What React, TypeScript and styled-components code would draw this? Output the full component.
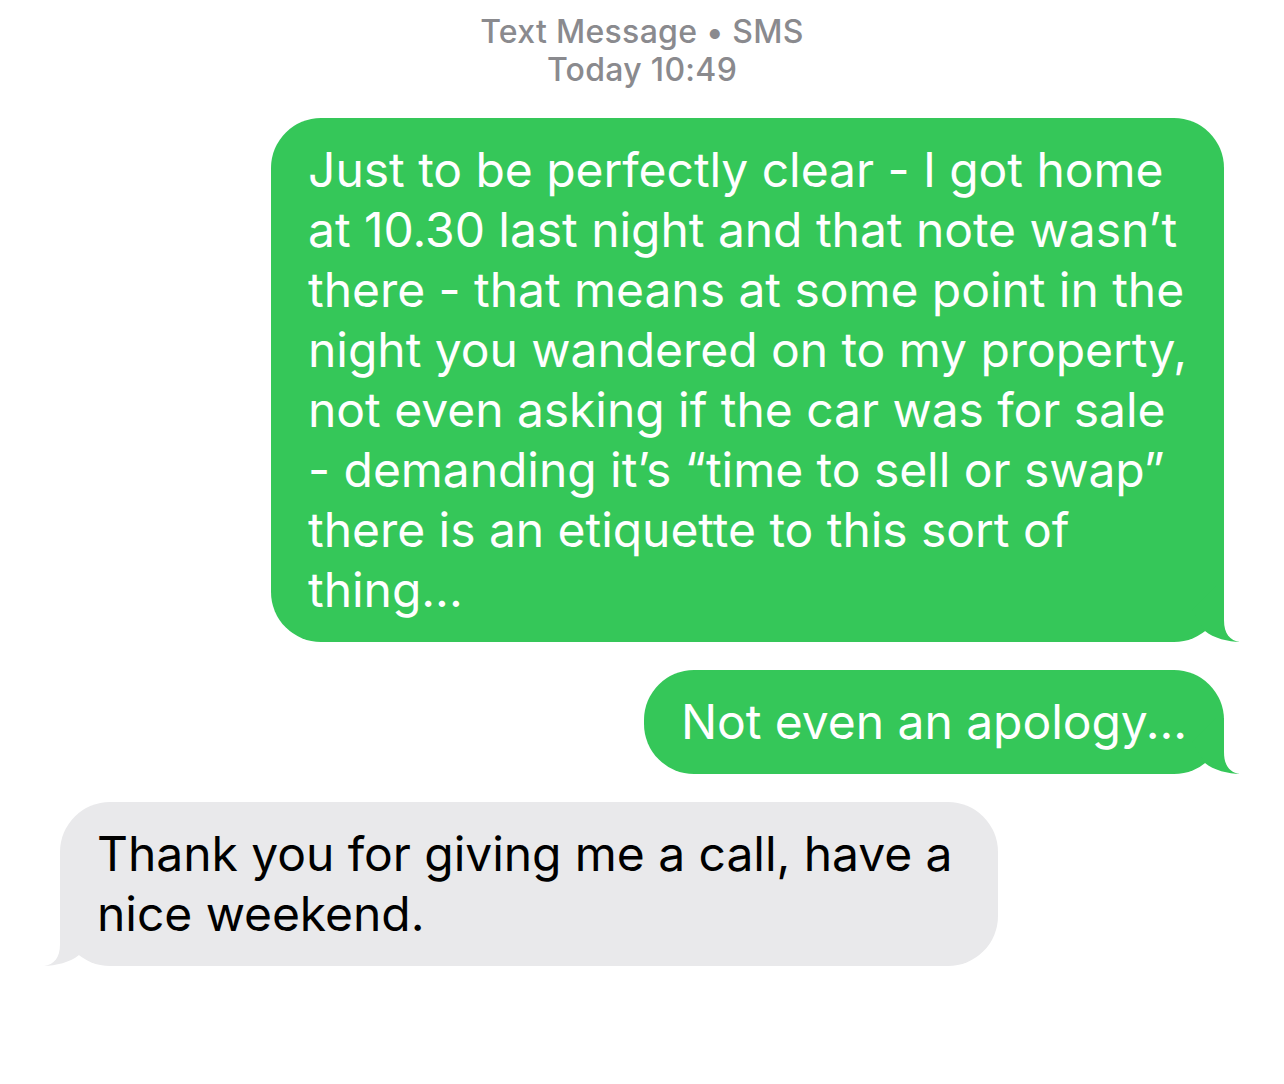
import React, { FC } from "react";
import styled, { createGlobalStyle } from "styled-components";

const GlobalStyle = createGlobalStyle`
  html, body {
    margin: 0;
    padding: 0;
    background: #ffffff;
  }
  body {
    font-family: Inter, "Liberation Sans", sans-serif;
    -webkit-font-smoothing: antialiased;
  }
`;

const SENT = "#35c759";
const RECEIVED = "#e9e9eb";

type Side = "sent" | "received";

const sentText = `Just to be perfectly clear - I got home
at 10.30 last night and that note wasn\u2019t
there - that means at some point in the
night you wandered on to my property,
not even asking if the car was for sale
- demanding it\u2019s \u201ctime to sell or swap\u201d
there is an etiquette to this sort of
thing...`;

const Tail: FC<{ side: Side }> = ({ side }) => (
  <TailSvg side={side} width="70" height="60" viewBox="-50 -60 70 60">
    <path
      d="M -8 -56 L 0 -56 L 0 -22 C 0 -8 6 -1.5 16 0 C 5 0 -11 -4 -19 -11 L -32 -32 Z"
      fill={side === "sent" ? SENT : RECEIVED}
    />
  </TailSvg>
);

const Message: FC<{ side: Side; text: string; width?: number }> = ({ side, text, width }) => (
  <Row side={side}>
    <Bubble side={side} style={width ? { width } : undefined}>
      {text}
      <Tail side={side} />
    </Bubble>
  </Row>
);

const App: FC = () => (
  <>
    <GlobalStyle />
    <Screen>
      <Header>
        <Service>Text Message • SMS</Service>
        <Stamp>Today 10:49</Stamp>
      </Header>
      <Thread>
        <Message side="sent" text={sentText} />
        <Message side="sent" text="Not even an apology..." />
        <Message side="received" text={"Thank you for giving me a call, have a\nnice weekend."} width={864} />
      </Thread>
    </Screen>
  </>
);

export default App;

const Screen = styled.div`
  width: 1284px;
  height: 1084px;
  box-sizing: border-box;
  padding: 13px 60px 0;
  overflow: hidden;
`;

const Header = styled.div`
  display: flex;
  flex-direction: column;
  align-items: center;
  color: #8a8a8e;
  font-size: 32px;
  line-height: 38px;
  font-weight: 500;
  letter-spacing: 0.3px;
`;

const Service = styled.div``;

const Stamp = styled.div``;

const Thread = styled.div`
  display: flex;
  flex-direction: column;
  margin-top: 29px;
  gap: 28px;
`;

const Row = styled.div<{ side: Side }>`
  display: flex;
  justify-content: ${(p) => (p.side === "sent" ? "flex-end" : "flex-start")};
`;

const Bubble = styled.div<{ side: Side }>`
  position: relative;
  background: ${(p) => (p.side === "sent" ? SENT : RECEIVED)};
  color: ${(p) => (p.side === "sent" ? "#ffffff" : "#000000")};
  border-radius: 50px;
  padding: 22px 37px;
  font-size: 48px;
  line-height: 60px;
  white-space: pre-line;
  letter-spacing: -0.05px;
`;

const TailSvg = styled.svg<{ side: Side }>`
  position: absolute;
  bottom: 0;
  ${(p) => (p.side === "sent" ? "right: -20px;" : "left: -20px; transform: scaleX(-1);")}
`;
